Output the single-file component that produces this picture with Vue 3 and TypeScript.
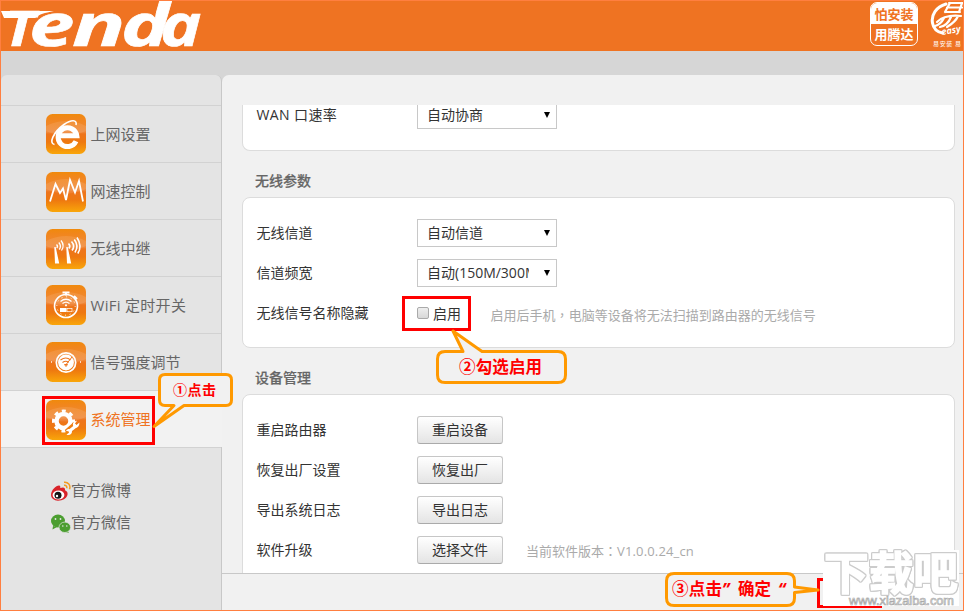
<script setup lang="ts">
interface NavItem {
  id: string
  label: string
}
interface ActionRow {
  label: string
  action: string
  version?: string
}
interface LogoLetter {
  char: string
  x: number
  stretch: number
}

const logoLetters: LogoLetter[] = [
  { char: 'e', x: 28, stretch: 1.38 },
  { char: 'n', x: 71, stretch: 1.5 },
  { char: 'd', x: 120, stretch: 1.38 },
  { char: 'a', x: 159, stretch: 1.18 },
]

const navItems: NavItem[] = [
  { id: 'internet', label: '上网设置' },
  { id: 'speed', label: '网速控制' },
  { id: 'relay', label: '无线中继' },
  { id: 'timer', label: 'WiFi 定时开关' },
  { id: 'signal', label: '信号强度调节' },
  { id: 'system', label: '系统管理' },
]
const activeId = 'system'

const actions: ActionRow[] = [
  { label: '重启路由器', action: '重启设备' },
  { label: '恢复出厂设置', action: '恢复出厂' },
  { label: '导出系统日志', action: '导出日志' },
  { label: '软件升级', action: '选择文件', version: 'V1.0.0.24_cn' },
]
</script>

<template>
  <div class="page" lang="zh-CN">
    <header class="header">
      <svg class="logo" width="204" height="50" viewBox="0 0 204 50">
        <text class="logo-text" x="3" y="44.500" font-size="48" textLength="31" lengthAdjust="spacingAndGlyphs">T</text>
        <path d="M0 10H53C43 12 39 13 34 17H3Z" fill="#fff" />
        <text
          v-for="letter in logoLetters"
          :key="letter.char"
          class="logo-text"
          :transform="`translate(${letter.x} 44.5) scale(${letter.stretch} 1)`"
          font-size="59"
        >{{ letter.char }}</text>
      </svg>
      <div class="badges">
        <div class="badge">
          <span class="badge-top">怕安装</span>
          <span class="badge-bottom">用腾达</span>
        </div>
        <svg class="easy" width="33" height="50" viewBox="0 0 33 50">
          <g fill="none" stroke="#fff" stroke-width="2.200" stroke-linecap="round">
            <path d="M16 3C6 6 1 14 2.500 22c1 6 5 9 10 10" stroke-width="3" />
            <path d="M19 2h14M17 6.500h15M15 11h15M20 2l-5 9M32 2l-3 9" />
            <path d="M7 21c5-5 14-7 24-6M14 17c-2 4-5 7-9 8M21 16c-2 5-6 9-11 10M28 15c-2 5-6 8-11 11" />
          </g>
          <text x="12" y="34" class="easy-script" transform="rotate(-10 12 34)">easy</text>
          <text x="3" y="44.500" class="easy-sub" textLength="28">易安装 易</text>
        </svg>
      </div>
    </header>

    <div class="body">
      <aside class="sidebar">
        <div class="sidebar-head"></div>
        <nav>
          <a v-for="item in navItems" :key="item.id" class="nav-item" :class="[{ active: item.id === activeId }, item.id]">
            <svg class="nav-icon" width="40" height="40" viewBox="0 0 40 40">
              <defs>
                <linearGradient :id="'g-' + item.id" x1="0" y1="0" x2="0" y2="1">
                  <stop offset="0" stop-color="#f08a0c" />
                  <stop offset="0.12" stop-color="#f1861c" />
                  <stop offset="0.45" stop-color="#f08a3c" />
                  <stop offset="0.5" stop-color="#ee741c" />
                  <stop offset="0.7" stop-color="#ee7810" />
                  <stop offset="1" stop-color="#f9a60a" />
                </linearGradient>
              </defs>
              <rect width="40" height="40" rx="6.5" :fill="'url(#g-' + item.id + ')'" />
              <path d="M0 17Q20 26 40 17V12Q20 2 0 12Z" fill="#fff" opacity=".1" />

              <g v-if="item.id === 'internet'" fill="none" stroke="#fff">
                <path d="M30 27.200A9.400 9.400 0 1 1 30.800 21.800H14.500" stroke-width="5" />
                <path d="M8.500 30.500C2.500 29.500 7 18.500 18 10.500C25 5.500 31.500 5.500 30 11" stroke-width="1.600" />
              </g>
              <path v-else-if="item.id === 'speed'" d="M4 29.500 9.500 12 14 21 17 16.500 20 28 24 8 29 20.500 33 9 37 29.500" fill="none" stroke="#fff" stroke-width="1.800" />
              <g v-else-if="item.id === 'relay'" fill="none" stroke="#fff">
                <path d="M8.300 18 9 34.500h4.200L9.700 18ZM20.300 18 21 34.500h4.200L21.700 18Z" fill="#fff" stroke="none" />
                <path d="M10.500 15.500q1.800 1.800 .3 3.500M12.800 13.500q3 3.500 .5 7M15 11.500q4 5 .5 10" stroke-width="1.300" />
                <path d="M22.500 14.500q2.500 2.500 .3 5M25.500 12.500q4 4.500 .5 9M28.300 10.500q5 6.500 .6 13M31 8.500q5.500 8.500 .8 16" stroke-width="1.600" />
              </g>
              <g v-else-if="item.id === 'timer'" fill="none" stroke="#fff">
                <circle cx="20" cy="21" r="11.500" stroke-width="1.600" />
                <circle cx="20" cy="21" r="9.200" stroke-width="1" stroke-dasharray="1 3.800" />
                <path d="M16.500 7.500h7M20 7.500v3M28 11l3 3" stroke-width="2" />
                <path d="M14.500 16.500q5.500-4.500 11 0M16.500 18.500q3.500-2.700 7 0" stroke-width="1.300" />
                <circle cx="20" cy="20.300" r="1.100" fill="#fff" stroke="none" />
                <rect x="14" y="23" width="6.500" height="4" fill="#fff" stroke="none" />
                <rect x="21" y="23.500" width="5" height="3.200" stroke-width=".7" />
              </g>
              <g v-else-if="item.id === 'signal'" fill="none" stroke="#fff">
                <circle cx="20" cy="20.500" r="9.700" stroke-width="1.700" />
                <circle cx="20" cy="20.500" r="7.900" fill="#fff" stroke="none" />
                <path d="M14.500 18q5.500-4 10 0M16.500 20.500q3.500-2.500 6 0" stroke="#ee741c" stroke-width="1.100" />
                <path d="M18.500 22.500h3L20 24.500ZM20.500 22 26 15" stroke="#ee741c" stroke-width="1" />
                <path d="M5.500 21v-2M34.500 21v-2" stroke-width="1" opacity=".7" />
              </g>
              <g v-else>
                <circle cx="17.500" cy="21" r="7" fill="none" stroke="#fff" stroke-width="4.500" />
                <circle cx="17.500" cy="21" r="10" fill="none" stroke="#fff" stroke-width="3" stroke-dasharray="3.930 3.924" stroke-dashoffset="2" />
                <path d="M21 32.500 30 24.500" stroke="#ee7d12" stroke-width="6.500" />
                <path d="M23.500 31 30.500 25.500" stroke="#fff" stroke-width="3.200" />
                <path d="M33.500 22.500 30.500 25 29 23.500 31 20.800C27.500 21 26 24 27.500 26.500 29 29 33.500 28 33.500 22.500ZM20.500 34.500 23 32.800 22.500 31.300 20 31C21.500 28 25.500 28.500 26 31.500 26 34.500 23 36 20.500 34.500Z" fill="#fff" />
              </g>
            </svg>
            <span class="nav-label">{{ item.label }}</span>
          </a>
        </nav>
        <div class="social">
          <a class="social-link">
            <svg width="21" height="21" viewBox="0 0 21 21">
              <path d="M1 14C1 9 6 4.500 9 4.500c1.500 0 1.500 1.500 1.200 2.500C13 6 15.500 6 15 9.300c5 1.700 3 10.200-7 10.500C4 19.500 1 17 1 14Z" fill="#d9232a" />
              <ellipse cx="8.500" cy="14" rx="5.900" ry="4.500" fill="#fff" />
              <circle cx="8" cy="14.300" r="3.500" fill="#151515" />
              <circle cx="7" cy="15" r="1.200" fill="#fff" />
              <path d="M14 1.200c4-.5 7 3 5.500 7M14 4.300c2-.3 3.300 1.200 2.700 3" fill="none" stroke="#f39a1e" stroke-width="1.500" />
            </svg>
            <span>官方微博</span>
          </a>
          <a class="social-link">
            <svg width="21" height="21" viewBox="0 0 21 21">
              <path d="M3 13 2.500 16.500 7 14Z" fill="#4b9e30" />
              <ellipse cx="8" cy="8" rx="7" ry="6.500" fill="#4b9e30" />
              <path d="M17 17l2 3-5-1.500Z" fill="#4b9e30" />
              <ellipse cx="14.800" cy="14.300" rx="5.800" ry="5.200" fill="#4b9e30" stroke="#e4e4e4" stroke-width=".7" />
              <g fill="#e4e4e4"><circle cx="5.500" cy="6" r=".9" /><circle cx="10.500" cy="6" r=".9" /><circle cx="12.800" cy="13" r=".8" /><circle cx="16.800" cy="13" r=".8" /></g>
            </svg>
            <span>官方微信</span>
          </a>
        </div>
      </aside>

      <main class="main">
        <div class="scroll">
          <section class="card card-wan">
            <div class="row">
              <label class="label wan-label">WAN 口速率</label>
              <div class="select"><span>自动协商</span><i></i></div>
            </div>
          </section>
          <h2 class="title">无线参数</h2>
          <section class="card card-wifi">
            <div class="row">
              <label class="label">无线信道</label>
              <div class="select"><span>自动信道</span><i></i></div>
            </div>
            <div class="row">
              <label class="label">信道频宽</label>
              <div class="select"><span>自动(150M/300M)</span><i></i></div>
            </div>
            <div class="row">
              <label class="label">无线信号名称隐藏</label>
              <div class="check"><b class="box"></b><span>启用</span></div>
              <span class="note hide-note">启用后手机<span class="mid" lang="zh-TW">，</span>电脑等设备将无法扫描到路由器的无线信号</span>
            </div>
          </section>
          <h2 class="title">设备管理</h2>
          <section class="card card-device">
            <div v-for="row in actions" :key="row.label" class="row">
              <label class="label">{{ row.label }}</label>
              <button class="btn" type="button">{{ row.action }}</button>
              <span v-if="row.version" class="note">当前软件版本<span class="mid" lang="zh-TW">：</span><span class="version">{{ row.version }}</span></span>
            </div>
          </section>
        </div>
        <footer class="footer"></footer>
      </main>
    </div>

    <!-- Step markers laid over the page -->
    <svg class="overlay" width="964" height="611" viewBox="0 0 964 611">
      <g fill="none" stroke="#f00" stroke-width="3">
        <rect x="43.500" y="397.500" width="110" height="46" />
        <rect x="403.500" y="297.500" width="66" height="32" />
        <path d="M882 606.500H818.500V579.500H830" />
      </g>
      <g fill="#f1f1f1" stroke="#ff9900" stroke-width="3" stroke-linejoin="round">
        <path d="M165 374.500H226Q231.500 374.500 231.500 380V400Q231.500 405.500 226 405.500H184L154 426.500 174 405.500H165Q159.500 405.500 159.500 400V380Q159.500 374.500 165 374.500Z" />
        <path d="M445 351.500H463L453 331 482 351.500H558Q565.500 351.500 565.500 359V375Q565.500 382.500 558 382.500H445Q437.500 382.500 437.500 375V359Q437.500 351.500 445 351.500Z" />
        <path d="M674 573.500H787Q794.500 573.500 794.500 581V587L818 590 794.500 592.500V598Q794.500 605.500 787 605.500H674Q666.500 605.500 666.500 598V581Q666.500 573.500 674 573.500Z" />
      </g>
      <g class="callout">
        <text x="173" y="395" font-size="14" textLength="43">①点击</text>
        <text x="459" y="372.500" font-size="16.500" textLength="83">②勾选启用</text>
        <text x="672" y="595" font-size="16.500" textLength="50">③点击</text>
        <text class="quote" x="722" y="596">”</text>
        <text x="738" y="595" font-size="16.500" textLength="33">确定</text>
        <text class="quote" x="778" y="596">“</text>
      </g>
      <rect x="823" y="550" width="136" height="56" fill="#fff" />
      <text class="watermark" x="824" y="590" font-size="45" textLength="134" lengthAdjust="spacingAndGlyphs">下载吧</text>
      <text class="site" x="849" y="605" font-size="12" textLength="105" lengthAdjust="spacingAndGlyphs">www.xiazaiba.com</text>
    </svg>
  </div>
</template>

<style>
body {
  margin: 0;
}
</style>

<style scoped>
.page {
  position: relative;
  box-sizing: border-box;
  width: 964px;
  height: 611px;
  overflow: hidden;
  border: 1px solid #ff7f40;
  background: #d6d6d6;
  font-family: 'Open Sans', 'Noto Sans CJK SC', sans-serif;
  font-size: 14px;
  color: #333;
  display: flex;
  flex-direction: column;
}
.header {
  flex: none;
  height: 50px;
  background: #ef7322;
  display: flex;
  justify-content: space-between;
}
.logo-text {
  font-family: 'Open Sans', sans-serif;
  font-weight: 700;
  font-style: italic;
  fill: #fff;
  stroke: #fff;
  stroke-width: 0.6px;
}
.badges {
  display: flex;
  gap: 12px;
}
.badge {
  box-sizing: border-box;
  width: 48px;
  height: 44px;
  margin-top: 1px;
  border: 1.5px solid #fff;
  border-radius: 7px;
  overflow: hidden;
  font: 700 13px/19px 'Noto Sans CJK SC', sans-serif;
  text-align: center;
  display: flex;
  flex-direction: column;
}
.badge-top {
  height: 21px;
  line-height: 21px;
  background: #fff;
  color: #ef7322;
}
.badge-bottom {
  color: #fff;
}
.easy-script {
  font: italic 700 9px 'Open Sans', sans-serif;
  fill: #fff;
}
.easy-sub {
  font: 6px 'Noto Sans CJK SC', sans-serif;
  fill: #fff;
}
.body {
  flex: 1;
  display: flex;
  padding-top: 24px;
}
.sidebar {
  box-sizing: border-box;
  width: 221px;
  background: #e4e4e4;
  border-right: 1px solid #c8c8c8;
  border-radius: 6px 6px 0 0;
}
.sidebar-head {
  height: 30px;
}
.nav-item {
  box-sizing: border-box;
  height: 57px;
  border-top: 1px solid #d2d2d2;
  padding: 0 0 1px 45px;
  display: flex;
  align-items: center;
  gap: 4.6px;
  font-size: 15px;
  color: #666;
}
.nav-item.speed .nav-icon,
.nav-item.relay .nav-icon,
.nav-item.system .nav-icon {
  margin-top: 2px;
}
.nav-item.timer .nav-label {
  letter-spacing: 0.28px;
}
.nav-item.active {
  width: 221px;
  background: #f2f2f2;
  color: #ef7322;
}
.social {
  border-top: 1px solid #d2d2d2;
  padding: 27px 0 0 49px;
}
.social-link {
  display: flex;
  align-items: center;
  height: 32px;
  font-size: 15px;
  color: #666;
}
.social-link span {
  padding-bottom: 4px;
}
.main {
  flex: 1;
  background: #f1f1f1;
  border-top-left-radius: 7px;
  display: flex;
  flex-direction: column;
  min-width: 0;
}
.scroll {
  box-sizing: border-box;
  height: 498px;
  border-top: 30px solid transparent;
  padding: 0 8px 0 20px;
  overflow: hidden;
}
.footer {
  flex: 1;
  border-top: 1px solid #c8c8c8;
}
.card {
  box-sizing: border-box;
  border: 1px solid #dcdcdc;
  border-radius: 8px;
  background: #fff;
  padding-left: 13.5px;
}
.card-wan {
  display: flow-root;
  height: 46px;
  border-top: 0;
  border-radius: 0 0 8px 8px;
}
.card-wan .row {
  margin-top: -10px;
}
.card-wifi {
  height: 151px;
  padding-top: 15px;
}
.card-device {
  height: 190px;
  padding-top: 15px;
}
.title {
  margin: 0;
  padding: 7px 0 0 13px;
  height: 39px;
  line-height: 46px;
  font-size: 14px;
  font-weight: 500;
  color: #666;
  -webkit-text-stroke: 0.2px #666;
}
.row {
  height: 40px;
  display: flex;
  align-items: center;
}
.label {
  width: 160.5px;
  padding-bottom: 2px;
}
.wan-label {
  letter-spacing: 0.4px;
}
.select {
  box-sizing: border-box;
  width: 140px;
  height: 28px;
  border: 1px solid #c8c8c8;
  background: #fff;
  padding: 0 6px 0 9px;
  display: flex;
  align-items: center;
  justify-content: space-between;
}
.select span {
  width: 102px;
  line-height: 26px;
  white-space: nowrap;
  overflow: hidden;
}
.select i {
  border: 3.5px solid transparent;
  border-top: 6px solid #000;
  border-bottom: 0;
}
.check {
  display: flex;
  align-items: center;
  gap: 4px;
  width: 73px;
}
.box {
  box-sizing: border-box;
  width: 12px;
  height: 12px;
  border: 1px solid #aaa;
  border-radius: 2px;
  background: linear-gradient(#eee, #d8d8d8);
}
.note {
  font-size: 13px;
  color: #aaa;
  padding-left: 23px;
  white-space: nowrap;
}
.hide-note {
  padding: 3px 0 0 0.6px;
}
.mid {
  font-family: 'Noto Sans CJK TC', sans-serif;
}
.version {
  letter-spacing: 0.15px;
}
.btn {
  box-sizing: border-box;
  width: 86px;
  height: 28px;
  padding: 0;
  border: 1px solid #c6c6c6;
  border-bottom-color: #aaa;
  border-radius: 3px;
  background: linear-gradient(#fff, #e4e4e4);
  font: inherit;
  line-height: 24px;
  color: #333;
}
.overlay {
  position: absolute;
  left: -1px;
  top: -1px;
  pointer-events: none;
}
.callout {
  font-family: 'Noto Sans CJK SC', sans-serif;
  font-weight: 700;
  fill: #f00;
}
.quote {
  font: italic 700 17px 'Open Sans', sans-serif;
}
.watermark {
  font-family: 'Noto Sans CJK SC', sans-serif;
  font-weight: 700;
  fill: #fff;
  stroke: #fff;
  stroke-width: 1.5px;
  filter: drop-shadow(1px 0 0 #ccc) drop-shadow(-1px 0 0 #ccc) drop-shadow(0 1px 0 #ccc) drop-shadow(0 -1px 0 #ccc);
}
.site {
  font-family: 'Liberation Sans', sans-serif;
  font-weight: 400;
  fill: #fff;
  stroke: #aaa;
  stroke-width: 0.7px;
}
</style>
